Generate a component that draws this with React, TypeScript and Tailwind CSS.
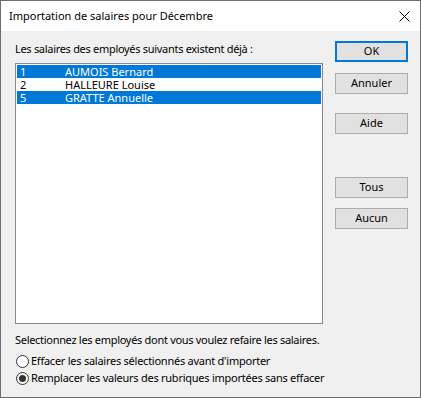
import React from "react";

const font = { fontFamily: '"Noto Sans", "Liberation Sans", sans-serif' };

function Btn({ label, primary }: { label: string; primary?: boolean }) {
  return (
    <div
      className={
        "w-[73px] h-[21px] flex items-center justify-center bg-[#e1e1e1] text-[11px] text-black " +
        (primary ? "border-2 border-[#0078d7]" : "border border-[#adadad]")
      }
    >
      {label}
    </div>
  );
}

function Radio({ checked, label }: { checked?: boolean; label: string }) {
  return (
    <div className="flex items-center h-[16px]">
      <div className="w-[13px] h-[13px] ml-[1px] shrink-0 rounded-full border border-[#333333] bg-white flex items-center justify-center">
        {checked && <div className="w-[7px] h-[7px] rounded-full bg-[#333333]" />}
      </div>
      <span className="ml-[2px] text-[11px] leading-[16px] tracking-[-0.25px] text-black whitespace-nowrap">{label}</span>
    </div>
  );
}

export default function App() {
  const rows = [
    { n: "1", name: "AUMOIS Bernard", sel: true },
    { n: "2", name: "HALLEURE Louise", sel: false },
    { n: "5", name: "GRATTE Annuelle", sel: true },
  ];
  return (
    <div style={font} className="w-[421px] h-[398px] border border-[#6e6e6e] bg-[#f0f0f0] flex flex-col">
      <div className="h-[30px] shrink-0 bg-white flex items-center justify-between pl-[8px] pr-[10px]">
        <span className="text-[11px] text-black whitespace-nowrap">Importation de salaires pour Décembre</span>
        <svg width="11" height="11" viewBox="0 0 11 11">
          <path d="M0.5 0.5 L10.5 10.5 M10.5 0.5 L0.5 10.5" stroke="#000" strokeWidth="1" />
        </svg>
      </div>
      <div className="flex pl-[14px] pt-[10px]">
        <div className="w-[308px] flex flex-col">
          <div className="h-[16px] text-[11px] leading-[16px] tracking-[-0.3px] text-black whitespace-nowrap">
            Les salaires des employés suivants existent déjà :
          </div>
          <div className="mt-[6px] h-[261px] border border-[#828790] bg-white p-[1px]">
            {rows.map((r) => (
              <div
                key={r.n}
                className={
                  "h-[13px] flex items-center text-[11px] leading-[12px] " +
                  (r.sel ? "bg-[#0078d7] text-white" : "text-black")
                }
              >
                <span className="w-[48px] pl-[3px]">{r.n}</span>
                <span className="whitespace-nowrap">{r.name}</span>
              </div>
            ))}
          </div>
          <div className="mt-[8px] h-[16px] text-[11px] leading-[16px] tracking-[-0.3px] text-black whitespace-nowrap">
            Selectionnez les employés dont vous voulez refaire les salaires.
          </div>
          <div className="mt-[5px] flex flex-col gap-[1px]">
            <Radio label="Effacer les salaires sélectionnés avant d'importer" />
            <Radio checked label="Remplacer les valeurs des rubriques importées sans effacer" />
          </div>
        </div>
        <div className="ml-[12px] flex flex-col">
          <Btn label="OK" primary />
          <div className="mt-[11px]"><Btn label="Annuler" /></div>
          <div className="mt-[19px]"><Btn label="Aide" /></div>
          <div className="mt-[43px]"><Btn label="Tous" /></div>
          <div className="mt-[10px]"><Btn label="Aucun" /></div>
        </div>
      </div>
    </div>
  );
}
